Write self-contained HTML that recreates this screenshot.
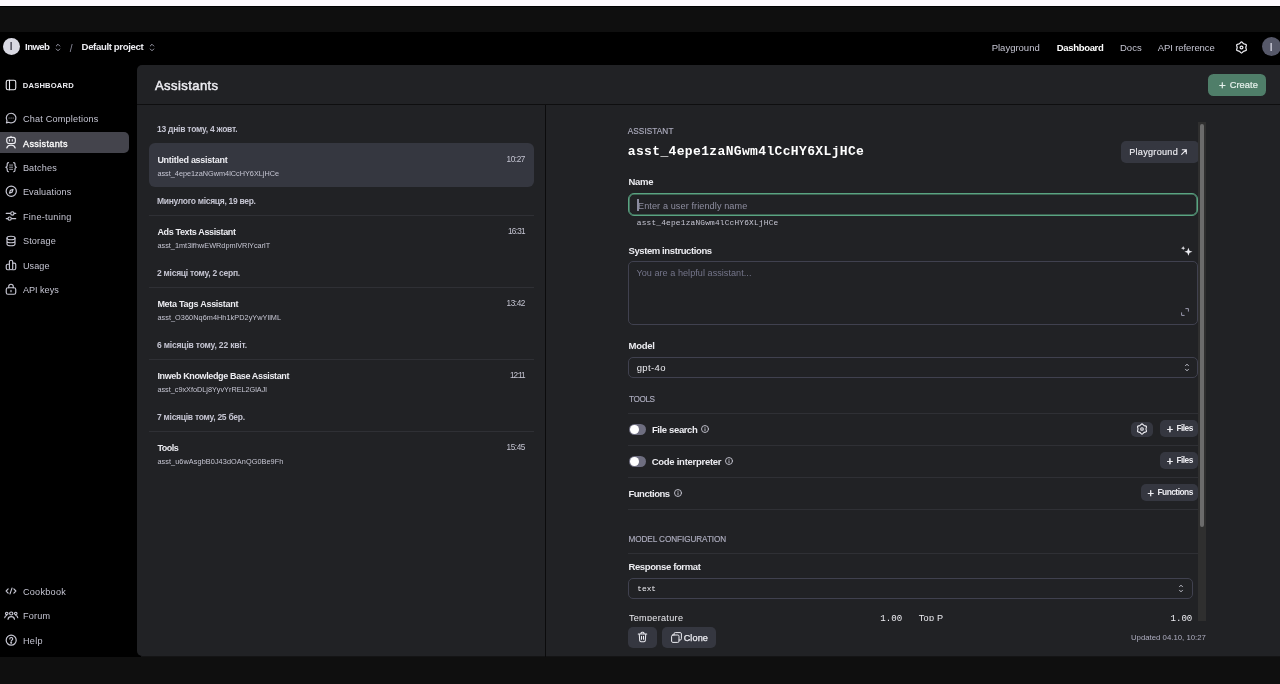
<!DOCTYPE html>
<html lang="uk">
<head>
<meta charset="utf-8">
<title>Assistants - OpenAI API</title>
<style>
*{box-sizing:border-box;margin:0;padding:0}
html,body{width:1280px;height:684px;overflow:hidden;background:#000}
body{position:relative;font-family:"Liberation Sans",sans-serif;color:#ececf1;will-change:transform}
.a{position:absolute}
.t{position:absolute;white-space:nowrap;line-height:1}
.mono{font-family:"Liberation Mono",monospace}
svg{position:absolute;overflow:visible}
.ic{stroke:#c8c8d4;fill:none;stroke-width:2.300;stroke-linecap:round;stroke-linejoin:round}
.icw{stroke:#ececf1;fill:none;stroke-width:2;stroke-linecap:round;stroke-linejoin:round}
.sep{position:absolute;left:149px;width:385px;height:1px;background:#2f3035}
.line{position:absolute;left:628px;width:570px;height:1px;background:#2f3035}
.box{position:absolute;left:628px;width:570px;border:1px solid #40414f;border-radius:5px}
.btn{position:absolute;background:#353740;border-radius:5px}
</style>
</head>
<body>
<div class="a" style="left:0;top:0;width:1280px;height:6px;background:#fdf9fe"></div>
<div class="a" style="left:0;top:7px;width:1280px;height:25px;background:#0f0f0f"></div>
<div class="a" style="left:0;top:657.300px;width:1280px;height:27px;background:#0f0f0f"></div>

<!-- header avatars / chevrons -->
<div class="a" style="left:2.600px;top:37.800px;width:17.400px;height:17.400px;border-radius:50%;background:#d9d9e3"></div>
<svg class="ic" style="left:55.300px;top:41.700px;stroke-width:1.700;stroke:#b4b4c4" width="6" height="11" viewBox="0 0 12 22"><path d="M2.5 8 6 4.5 9.5 8M2.5 14 6 17.5 9.500 14"/></svg>
<svg class="ic" style="left:149.300px;top:41.700px;stroke-width:1.700;stroke:#b4b4c4" width="6" height="11" viewBox="0 0 12 22"><path d="M2.5 8 6 4.5 9.5 8M2.5 14 6 17.5 9.500 14"/></svg>
<svg class="icw" style="left:1234.800px;top:40.700px;stroke-width:2.300" width="13" height="13" viewBox="0 0 24 24"><path d="M12.00 1.70C13.20 1.70 14.66 4.30 16.00 5.07C17.34 5.84 20.32 5.81 20.92 6.85C21.52 7.89 20.00 10.46 20.00 12.00C20.00 13.54 21.52 16.11 20.92 17.15C20.32 18.19 17.34 18.16 16.00 18.93C14.66 19.70 13.20 22.30 12.00 22.30C10.80 22.30 9.34 19.70 8.00 18.93C6.66 18.16 3.68 18.19 3.08 17.15C2.48 16.11 4.00 13.55 4.00 12.00C4.00 10.46 2.48 7.89 3.08 6.85C3.68 5.81 6.66 5.84 8.00 5.07C9.34 4.30 10.80 1.70 12.00 1.70z"/><circle cx="12" cy="12" r="2.600"/></svg>
<div class="a" style="left:1261.700px;top:37.200px;width:19.100px;height:19.100px;border-radius:50%;background:#565869"></div>

<!-- sidebar -->
<div class="a" style="left:0;top:132px;width:129px;height:21.200px;background:#44444c;border-radius:0 5px 5px 0"></div>
<svg class="icw" style="left:4.900px;top:79.200px;stroke-width:2.200" width="12" height="12" viewBox="0 0 24 24"><rect x="2.500" y="2.500" width="19" height="19" rx="3.500"/><path d="M9 2.500v19"/></svg>
<!-- chat -->
<svg class="ic" style="left:4.900px;top:112.200px;stroke-width:2.300" width="12.200" height="12.200" viewBox="0 0 24 24"><path d="M12 2.500a9.500 9.500 0 1 1-4.700 17.750L2.800 21.500l1.200-4.300A9.500 9.500 0 0 1 12 2.500z"/><circle cx="8" cy="12" r="1" fill="#c5c5d2" stroke="none"/><circle cx="12" cy="12" r="1" fill="#c5c5d2" stroke="none"/><circle cx="16" cy="12" r="1" fill="#c5c5d2" stroke="none"/></svg>
<!-- assistants -->
<svg class="icw" style="left:5px;top:136px;stroke-width:2.400" width="12" height="13" viewBox="0 0 24 26"><path d="M12 .8v1.500"/><rect x="3.500" y="2.600" width="17.200" height="12.400" rx="4.500"/><path d="M8.800 7.200v3M14.600 7.200v3" stroke-width="2"/><path d="M3.600 24c1.300-4.200 4.300-5.800 8.400-5.800s7.100 1.600 8.400 5.800"/></svg>
<!-- batches -->
<svg class="ic" style="left:4.900px;top:160.900px" width="12.200" height="12.400" viewBox="0 0 24 24"><path d="M7 3C4.800 3 4.300 4 4.300 5.800v2.700c0 1.800-.8 3-2.800 3.500 2 .5 2.800 1.700 2.800 3.500v2.700C4.300 20 4.800 21 7 21M17 3c2.200 0 2.700 1 2.700 2.800v2.700c0 1.800.8 3 2.800 3.500-2 .5-2.800 1.700-2.800 3.500v2.700c0 1.800-.5 2.800-2.700 2.800"/><path stroke-width="1.500" d="M9 7.800h6M9 12h6M9 16.200h6"/></svg>
<!-- evaluations -->
<svg class="ic" style="left:4.500px;top:185.400px" width="12.500" height="12.500" viewBox="0 0 24 24"><circle cx="12" cy="12" r="9.800"/><path d="M15.500 8.500l-1.800 5.200-5.200 1.800 1.800-5.200z"/></svg>
<!-- fine tuning -->
<svg class="ic" style="left:4.8px;top:210.300px" width="12" height="12" viewBox="0 0 24 24"><path d="M2.500 6.800h8M18.500 6.800h3M2.500 17.200h3M13.500 17.200h8"/><circle cx="14.700" cy="6.800" r="3.300"/><circle cx="9.300" cy="17.200" r="3.300"/></svg>
<!-- storage -->
<svg class="ic" style="left:4.8px;top:234.600px" width="12" height="12" viewBox="0 0 24 24"><ellipse cx="12" cy="6" rx="8" ry="3.500"/><path d="M4 6v12c0 1.900 3.600 3.500 8 3.500s8-1.600 8-3.500V6M4 12c0 1.900 3.600 3.500 8 3.500s8-1.600 8-3.500"/></svg>
<!-- usage -->
<svg class="ic" style="left:4.8px;top:259.200px" width="12" height="12" viewBox="0 0 24 24"><rect x="8.800" y="2.500" width="6.600" height="19" rx="3"/><path d="M8.800 10.500H5.500a3 3 0 0 0-3 3v5a3 3 0 0 0 3 3h3.300M15.400 8.200h3.100a3 3 0 0 1 3 3v7.300a3 3 0 0 1-3 3h-3.100"/></svg>
<!-- api keys -->
<svg class="ic" style="left:4.8px;top:283.300px" width="12" height="12.500" viewBox="0 0 24 25"><rect x="2.500" y="9.500" width="19" height="13" rx="3.500"/><path d="M7.500 9.500V7a4.500 4.500 0 0 1 9 0v2.500M12 14.500v3"/></svg>
<!-- cookbook -->
<svg class="ic" style="left:4.800px;top:584.900px" width="12" height="12" viewBox="0 0 24 24"><path d="M6.300 7.800 2.300 12l4 4.200M17.700 7.800l4 4.200-4 4.200M14 6.300l-4 11.400"/></svg>
<!-- forum -->
<svg class="ic" style="left:3.500px;top:610.600px" width="14.500" height="9" viewBox="0 0 29 20" preserveAspectRatio="none"><circle cx="14.500" cy="5.500" r="3.300"/><path d="M8 18.500c.5-4 3-6 6.500-6s6 2 6.500 6"/><circle cx="5.500" cy="5.500" r="2.500"/><path d="M1.500 15c.3-2.800 1.700-4.500 4-4.900"/><circle cx="23.500" cy="5.500" r="2.500"/><path d="M27.500 15c-.3-2.800-1.700-4.500-4-4.900"/></svg>
<!-- help -->
<svg class="ic" style="left:4.600px;top:633.900px" width="12.400" height="12.400" viewBox="0 0 24 24"><circle cx="12" cy="12" r="9.700"/><path d="M9.300 9.500a2.800 2.800 0 1 1 4 2.600c-.9.500-1.300 1-1.300 1.900"/><circle cx="12" cy="17" r=".8" fill="#c5c5d2"/></svg>

<!-- panel -->
<div class="a" style="left:141px;top:656px;width:1139px;height:1px;background:#141415"></div>
<div class="a" style="left:137px;top:65px;width:1143px;height:591.400px;background:#212225;border-radius:5px 0 0 5px"></div>
<div class="a" style="left:137px;top:103.500px;width:1143px;height:1px;background:#0e0e0f"></div>
<div class="a" style="left:545px;top:104.500px;width:1px;height:552.300px;background:#0b0b0c"></div>
<div class="a" style="left:1208px;top:74px;width:58.300px;height:21.800px;border-radius:5.500px;background:#4f7e69"></div>

<!-- list -->
<div class="a" style="left:149px;top:143px;width:385px;height:44px;border-radius:6px;background:#353740"></div>
<div class="sep" style="top:215px"></div>
<div class="sep" style="top:287px"></div>
<div class="sep" style="top:359px"></div>
<div class="sep" style="top:431px"></div>

<!-- detail -->
<div class="btn" style="left:1121.200px;top:141.200px;width:77.500px;height:21.800px"></div>
<div class="box" style="top:193px;height:23px;border:1px solid #5aa482;border-radius:6px;box-shadow:inset 0 0 0 .6px #58a07f"></div>
<div class="a" style="left:637px;top:198.500px;width:1.600px;height:12px;background:#8c8ca0"></div>
<svg class="icw" style="left:1181.300px;top:149.300px;stroke-width:1.150" width="6" height="6" viewBox="0 0 6 6"><path d="M1.300.700h4v4M5.300.700.700 5.300"/></svg>
<!-- sparkles -->
<svg style="left:1181px;top:246px" width="11.500" height="10.500" viewBox="0 0 24 22" fill="#ececf1"><path d="M15.500 3.500 17.800 9.700 24 12l-6.200 2.300L15.500 20.500l-2.300-6.200L7 12l6.200-2.300z"/><path d="M4.500 0l1.200 3.300L9 4.500 5.700 5.700 4.500 9 3.300 5.700 0 4.500l3.300-1.200z"/></svg>
<div class="box" style="top:261px;height:64px"></div>
<svg class="ic" style="left:1181px;top:308px;stroke-width:1;stroke:#9a9aae" width="8" height="8" viewBox="0 0 8 8"><path d="M4.800.6h2.600v2.600M3.200 7.400H.6V4.800"/></svg>
<div class="box" style="top:357px;height:21px"></div>
<svg class="ic" style="left:1183.700px;top:362px;stroke-width:1.800" width="6" height="11" viewBox="0 0 12 22"><path d="M3 7.500 6 4.300 9 7.500M3 14.500 6 17.700 9 14.500"/></svg>

<div class="line" style="top:413px"></div>
<div class="line" style="top:445px"></div>
<div class="line" style="top:477px"></div>
<div class="line" style="top:509px"></div>
<div class="line" style="top:553px"></div>
<!-- toggles -->
<div class="a" style="left:628.600px;top:423.800px;width:17.900px;height:11.200px;border-radius:6px;background:#6e6e80"></div>
<div class="a" style="left:629.800px;top:425px;width:8.800px;height:8.800px;border-radius:50%;background:#fff"></div>
<div class="a" style="left:628.600px;top:455.800px;width:17.900px;height:11.200px;border-radius:6px;background:#6e6e80"></div>
<div class="a" style="left:629.800px;top:457px;width:8.800px;height:8.800px;border-radius:50%;background:#fff"></div>
<!-- info icons -->
<svg class="ic" style="left:701px;top:425.200px;stroke-width:1.8" width="8" height="8" viewBox="0 0 16 16"><circle cx="8" cy="8" r="7"/><path d="M8 7.500v4M8 4.600v.1"/></svg>
<svg class="ic" style="left:725.200px;top:457px;stroke-width:1.8" width="8" height="8" viewBox="0 0 16 16"><circle cx="8" cy="8" r="7"/><path d="M8 7.500v4M8 4.600v.1"/></svg>
<svg class="ic" style="left:673.700px;top:489px;stroke-width:1.8" width="8" height="8" viewBox="0 0 16 16"><circle cx="8" cy="8" r="7"/><path d="M8 7.500v4M8 4.600v.1"/></svg>
<!-- tool buttons -->
<div class="btn" style="left:1130.700px;top:421.800px;width:22.800px;height:14.900px"></div>
<svg class="icw" style="left:1136px;top:423.200px;stroke-width:2.200" width="12" height="12" viewBox="0 0 24 24"><path d="M12.00 1.70C13.20 1.70 14.66 4.30 16.00 5.07C17.34 5.84 20.32 5.81 20.92 6.85C21.52 7.89 20.00 10.46 20.00 12.00C20.00 13.54 21.52 16.11 20.92 17.15C20.32 18.19 17.34 18.16 16.00 18.93C14.66 19.70 13.20 22.30 12.00 22.30C10.80 22.30 9.34 19.70 8.00 18.93C6.66 18.16 3.68 18.19 3.08 17.15C2.48 16.11 4.00 13.55 4.00 12.00C4.00 10.46 2.48 7.89 3.08 6.85C3.68 5.81 6.66 5.84 8.00 5.07C9.34 4.30 10.80 1.70 12.00 1.70z"/><circle cx="12" cy="12" r="2.600"/></svg>
<div class="btn" style="left:1160.300px;top:420.300px;width:37.300px;height:16.700px"></div>
<div class="btn" style="left:1160.300px;top:452.200px;width:37.300px;height:16.700px"></div>
<div class="btn" style="left:1141.300px;top:484.100px;width:56.300px;height:16.800px"></div>

<div class="box" style="top:578px;height:20.500px;width:564.500px"></div>
<svg class="ic" style="left:1178.200px;top:582.500px;stroke-width:1.800" width="6" height="11" viewBox="0 0 12 22"><path d="M3 7.500 6 4.300 9 7.500M3 14.500 6 17.700 9 14.500"/></svg>

<!-- clipped row -->
<div class="a" style="left:620px;top:605px;width:578px;height:16.200px;overflow:hidden">
<span class="t" style="left:8.900px;top:9.200px;font-size:9.100px;color:#ececf1;letter-spacing:.3px">Temperature</span>
<span class="t mono" style="left:260.300px;top:8.900px;font-size:9.100px;color:#ececf1">1.00</span>
<span class="t" style="left:298.700px;top:9.200px;font-size:9.100px;color:#ececf1;letter-spacing:.3px">Top P</span>
<span class="t mono" style="left:550.500px;top:8.900px;font-size:9.100px;color:#ececf1">1.00</span>
</div>

<!-- scrollbar -->
<div class="a" style="left:1198px;top:122px;width:8.300px;height:499px;background:#2f2f2f"></div>
<div class="a" style="left:1200.400px;top:124.200px;width:4px;height:403.300px;border-radius:2px;background:#6b6b6b"></div>

<!-- footer buttons -->
<div class="btn" style="left:628.200px;top:626.700px;width:28.500px;height:21.800px"></div>
<svg class="icw" style="left:637px;top:630.700px;stroke-width:2.100" width="11" height="12" viewBox="0 0 22 24"><path d="M2.500 6h17M8 6V4.500a2 2 0 0 1 2-2h2a2 2 0 0 1 2 2V6M4.500 6l.9 13a2.500 2.500 0 0 0 2.500 2.300h6.200a2.500 2.500 0 0 0 2.500-2.300l.9-13M9 10.500v6M13 10.500v6"/></svg>
<div class="btn" style="left:662px;top:626.800px;width:54.200px;height:21.600px"></div>
<svg class="icw" style="left:670.800px;top:632.200px;stroke-width:2" width="11" height="11" viewBox="0 0 22 22"><rect x="1.200" y="6" width="14.800" height="14.800" rx="2.500"/><path d="M6 6V3.700a2.500 2.500 0 0 1 2.500-2.500h9.800a2.500 2.500 0 0 1 2.500 2.500v9.800a2.500 2.500 0 0 1-2.500 2.500H16"/></svg>

<span class="t" style="left:9.71px;top:42.02px;font-size:10px;color:#4a4a58;font-weight:bold;">I</span>
<span class="t" style="left:25.10px;top:42.02px;font-size:9.6px;color:#ececf1;font-weight:bold;letter-spacing:-0.588px;">Inweb</span>
<span class="t" style="left:69.81px;top:44.02px;font-size:10px;color:#8e8ea0;">/</span>
<span class="t" style="left:81.60px;top:42.02px;font-size:9.6px;color:#ececf1;font-weight:bold;letter-spacing:-0.370px;">Default project</span>
<span class="t" style="left:991.70px;top:43.02px;font-size:9.5px;color:#c5c5d2;letter-spacing:-0.007px;">Playground</span>
<span class="t" style="left:1056.70px;top:43.02px;font-size:9.5px;color:#fff;font-weight:bold;letter-spacing:-0.312px;">Dashboard</span>
<span class="t" style="left:1119.95px;top:43.02px;font-size:9.5px;color:#c5c5d2;letter-spacing:0.028px;">Docs</span>
<span class="t" style="left:1157.70px;top:43.02px;font-size:9.5px;color:#c5c5d2;letter-spacing:-0.088px;">API reference</span>
<span class="t" style="left:1269.68px;top:43.02px;font-size:10.2px;color:#c5c5d2;font-weight:bold;">I</span>
<span class="t" style="left:22.80px;top:82.02px;font-size:7.6px;color:#ececf1;font-weight:bold;letter-spacing:0.183px;">DASHBOARD</span>
<span class="t" style="left:22.90px;top:115.02px;font-size:9.1px;color:#c5c5d2;letter-spacing:0.212px;">Chat Completions</span>
<span class="t" style="left:23.00px;top:140.02px;font-size:9.1px;color:#fff;letter-spacing:0.335px;-webkit-text-stroke:.3px #fff;">Assistants</span>
<span class="t" style="left:22.90px;top:164.02px;font-size:9.1px;color:#c5c5d2;letter-spacing:0.163px;">Batches</span>
<span class="t" style="left:22.90px;top:188.02px;font-size:9.1px;color:#c5c5d2;letter-spacing:0.133px;">Evaluations</span>
<span class="t" style="left:22.90px;top:213.02px;font-size:9.1px;color:#c5c5d2;letter-spacing:0.298px;">Fine-tuning</span>
<span class="t" style="left:22.90px;top:237.02px;font-size:9.1px;color:#c5c5d2;letter-spacing:0.194px;">Storage</span>
<span class="t" style="left:22.90px;top:262.02px;font-size:9.1px;color:#c5c5d2;letter-spacing:0.092px;">Usage</span>
<span class="t" style="left:22.90px;top:286.02px;font-size:9.1px;color:#c5c5d2;">API keys</span>
<span class="t" style="left:22.90px;top:588.02px;font-size:9.1px;color:#c5c5d2;letter-spacing:0.283px;">Cookbook</span>
<span class="t" style="left:22.90px;top:612.02px;font-size:9.1px;color:#c5c5d2;letter-spacing:0.232px;">Forum</span>
<span class="t" style="left:22.90px;top:637.02px;font-size:9.1px;color:#c5c5d2;letter-spacing:0.323px;">Help</span>
<span class="t" style="left:154.90px;top:79.02px;font-size:13px;color:#ececf1;letter-spacing:0.441px;-webkit-text-stroke:.5px #ececf1;">Assistants</span>
<span class="t" style="left:1218.89px;top:80.02px;font-size:11.5px;color:#e6f1ec;-webkit-text-stroke:.25px #e6f1ec;">+</span>
<span class="t" style="left:1229.70px;top:81.02px;font-size:9.3px;color:#e6f1ec;letter-spacing:0.054px;-webkit-text-stroke:.2px #e6f1ec;">Create</span>
<span class="t" style="left:157.00px;top:125.02px;font-size:8.5px;color:#c5c5d2;font-weight:bold;letter-spacing:-0.245px;">13 днів тому, 4 жовт.</span>
<span class="t" style="left:157.00px;top:197.02px;font-size:8.5px;color:#c5c5d2;font-weight:bold;letter-spacing:-0.307px;">Минулого місяця, 19 вер.</span>
<span class="t" style="left:157.00px;top:269.02px;font-size:8.5px;color:#c5c5d2;font-weight:bold;letter-spacing:-0.263px;">2 місяці тому, 2 серп.</span>
<span class="t" style="left:157.00px;top:341.02px;font-size:8.5px;color:#c5c5d2;font-weight:bold;letter-spacing:-0.178px;">6 місяців тому, 22 квіт.</span>
<span class="t" style="left:157.00px;top:413.02px;font-size:8.5px;color:#c5c5d2;font-weight:bold;letter-spacing:-0.271px;">7 місяців тому, 25 бер.</span>
<span class="t" style="left:157.40px;top:156.02px;font-size:9px;color:#ececf1;font-weight:bold;letter-spacing:-0.277px;">Untitled assistant</span>
<span class="t" style="left:157.40px;top:170.02px;font-size:7.3px;color:#c5c5d2;">asst_4epe1zaNGwm4lCcHY6XLjHCe</span>
<span class="t" style="left:506.50px;top:156.02px;font-size:8.2px;color:#c5c5d2;letter-spacing:-0.409px;">10:27</span>
<span class="t" style="left:157.40px;top:228.02px;font-size:9px;color:#ececf1;font-weight:bold;letter-spacing:-0.360px;">Ads Texts Assistant</span>
<span class="t" style="left:157.40px;top:242.02px;font-size:7.3px;color:#c5c5d2;letter-spacing:0.017px;">asst_1mt3lfhwEWRdpmlVRlYcarlT</span>
<span class="t" style="left:508.10px;top:228.02px;font-size:8.2px;color:#c5c5d2;letter-spacing:-0.773px;">16:31</span>
<span class="t" style="left:157.40px;top:300.02px;font-size:9px;color:#ececf1;font-weight:bold;letter-spacing:-0.273px;">Meta Tags Assistant</span>
<span class="t" style="left:157.40px;top:314.02px;font-size:7.3px;color:#c5c5d2;letter-spacing:0.057px;">asst_O360Nq6m4Hh1kPD2yYwYllML</span>
<span class="t" style="left:506.50px;top:300.02px;font-size:8.2px;color:#c5c5d2;letter-spacing:-0.409px;">13:42</span>
<span class="t" style="left:157.40px;top:372.02px;font-size:9px;color:#ececf1;font-weight:bold;letter-spacing:-0.367px;">Inweb Knowledge Base Assistant</span>
<span class="t" style="left:157.40px;top:386.02px;font-size:7.3px;color:#c5c5d2;letter-spacing:-0.011px;">asst_c9xXfoDLj8YyvYrREL2GlAJl</span>
<span class="t" style="left:510.10px;top:372.02px;font-size:8.2px;color:#c5c5d2;letter-spacing:-1.089px;">12:11</span>
<span class="t" style="left:157.40px;top:444.02px;font-size:9px;color:#ececf1;font-weight:bold;letter-spacing:-0.464px;">Tools</span>
<span class="t" style="left:157.40px;top:458.02px;font-size:7.3px;color:#c5c5d2;letter-spacing:0.080px;">asst_u6wAsgbB0J43dOAnQG0Be9Fh</span>
<span class="t" style="left:506.50px;top:444.02px;font-size:8.2px;color:#c5c5d2;letter-spacing:-0.409px;">15:45</span>
<span class="t" style="left:627.70px;top:128.02px;font-size:8.2px;color:#acacbe;letter-spacing:0.102px;-webkit-text-stroke:.15px #acacbe;">ASSISTANT</span>
<span class="t mono" style="left:627.80px;top:145.02px;font-size:13px;color:#fff;font-weight:bold;letter-spacing:0.352px;">asst_4epe1zaNGwm4lCcHY6XLjHCe</span>
<span class="t" style="left:1129.20px;top:148.02px;font-size:9.1px;color:#ececf1;letter-spacing:0.286px;-webkit-text-stroke:.15px #ececf1;">Playground</span>
<span class="t" style="left:628.45px;top:177.02px;font-size:9.5px;color:#ececf1;font-weight:bold;letter-spacing:-0.257px;">Name</span>
<span class="t" style="left:638.00px;top:202.02px;font-size:9.1px;color:#8e8ea0;letter-spacing:0.104px;">Enter a user friendly name</span>
<span class="t mono" style="left:636.80px;top:220.02px;font-size:7.8px;color:#c5c5d2;letter-spacing:0.204px;">asst_4epe1zaNGwm4lCcHY6XLjHCe</span>
<span class="t" style="left:628.45px;top:246.02px;font-size:9.5px;color:#ececf1;font-weight:bold;letter-spacing:-0.397px;">System instructions</span>
<span class="t" style="left:636.45px;top:269.02px;font-size:9.1px;color:#74758a;letter-spacing:0.037px;">You are a helpful assistant...</span>
<span class="t" style="left:628.45px;top:341.02px;font-size:9.5px;color:#ececf1;font-weight:bold;letter-spacing:-0.217px;">Model</span>
<span class="t" style="left:636.70px;top:363.02px;font-size:9.5px;color:#ececf1;letter-spacing:0.382px;">gpt-4o</span>
<span class="t" style="left:628.95px;top:396.02px;font-size:8.2px;color:#acacbe;letter-spacing:-0.366px;-webkit-text-stroke:.15px #acacbe;">TOOLS</span>
<span class="t" style="left:651.90px;top:425.02px;font-size:9.5px;color:#ececf1;font-weight:bold;letter-spacing:-0.369px;">File search</span>
<span class="t" style="left:651.70px;top:457.02px;font-size:9.5px;color:#ececf1;font-weight:bold;letter-spacing:-0.270px;">Code interpreter</span>
<span class="t" style="left:628.45px;top:489.02px;font-size:9.5px;color:#ececf1;font-weight:bold;letter-spacing:-0.463px;">Functions</span>
<span class="t" style="left:1166.79px;top:424.02px;font-size:10.8px;color:#ececf1;-webkit-text-stroke:.45px #ececf1;">+</span>
<span class="t" style="left:1176.50px;top:424.02px;font-size:8.4px;color:#ececf1;font-weight:bold;letter-spacing:-0.567px;">Files</span>
<span class="t" style="left:1166.79px;top:456.02px;font-size:10.8px;color:#ececf1;-webkit-text-stroke:.45px #ececf1;">+</span>
<span class="t" style="left:1176.50px;top:456.02px;font-size:8.4px;color:#ececf1;font-weight:bold;letter-spacing:-0.567px;">Files</span>
<span class="t" style="left:1147.59px;top:488.02px;font-size:10.8px;color:#ececf1;-webkit-text-stroke:.45px #ececf1;">+</span>
<span class="t" style="left:1157.45px;top:488.02px;font-size:8.4px;color:#ececf1;font-weight:bold;letter-spacing:-0.520px;">Functions</span>
<span class="t" style="left:628.45px;top:536.02px;font-size:8.2px;color:#acacbe;letter-spacing:-0.077px;-webkit-text-stroke:.15px #acacbe;">MODEL CONFIGURATION</span>
<span class="t" style="left:628.45px;top:562.02px;font-size:9.5px;color:#ececf1;font-weight:bold;letter-spacing:-0.372px;">Response format</span>
<span class="t mono" style="left:637.30px;top:586.02px;font-size:7.8px;color:#ececf1;letter-spacing:0.009px;">text</span>
<span class="t" style="left:683.70px;top:634.02px;font-size:9.1px;color:#ececf1;letter-spacing:0.110px;-webkit-text-stroke:.25px #ececf1;">Clone</span>
<span class="t" style="left:1130.95px;top:634.02px;font-size:7.8px;color:#acacbe;">Updated 04.10, 10:27</span>
</body>
</html>
